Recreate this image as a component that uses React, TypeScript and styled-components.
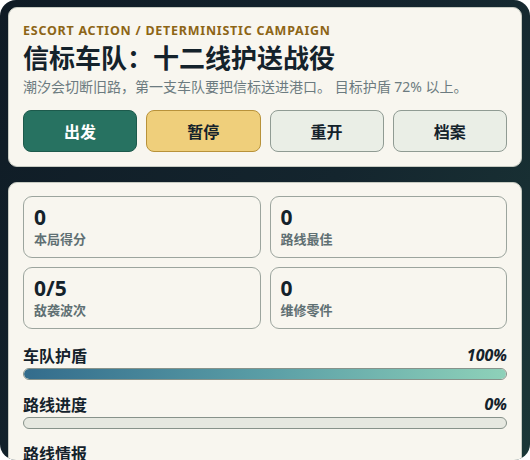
import styled, { createGlobalStyle } from 'styled-components'

const GlobalStyle = createGlobalStyle`
  html, body {
    margin: 0;
    padding: 0;
    background: #ffffff;
  }

  body {
    font-family: 'Noto Sans', 'Noto Sans CJK SC', sans-serif;
    color: #14222b;
  }

  * {
    box-sizing: border-box;
  }
`

type Tone = 'go' | 'pause' | 'plain'

const Shell = styled.div`
  display: flex;
  flex-direction: column;
  gap: 15px;
  height: 460px;
  overflow: hidden;
  padding: 7px 8px;
  border-radius: 16px;
  background: linear-gradient(120deg, #0f1b25 0%, #14252e 55%, #1b3737 100%);
`

const Card = styled.section<{ $tight?: boolean }>`
  flex-shrink: 0;
  padding: ${({ $tight }) => ($tight ? '13px 14px 14px' : '14px')};
  border: 1px solid #c7cbc2;
  border-radius: 9px;
  background: #f8f6ef;
`

const Eyebrow = styled.div`
  font-size: 12.5px;
  font-weight: 700;
  line-height: 18px;
  letter-spacing: 0.06em;
  text-transform: uppercase;
  color: #8d6516;
`

const Title = styled.h1`
  margin: 1px 0 0;
  font-size: 26px;
  font-weight: 700;
  line-height: 34px;
  color: #14222b;
`

const Lead = styled.p`
  margin: 2px 0 0;
  font-size: 14px;
  line-height: 20px;
  color: #6c7b80;
`

const Actions = styled.div`
  display: grid;
  grid-template-columns: repeat(4, 1fr);
  gap: 9px;
  margin-top: 13px;
`

const tones: Record<Tone, { bg: string; border: string; color: string }> = {
  go: { bg: '#277261', border: '#1d5a4c', color: '#ffffff' },
  pause: { bg: '#efcf7b', border: '#b8923a', color: '#14222b' },
  plain: { bg: '#eaeee6', border: '#909b93', color: '#14222b' }
}

const Button = styled.button<{ $tone: Tone }>`
  height: 42px;
  border-radius: 8px;
  border: 1px solid ${({ $tone }) => tones[$tone].border};
  background: ${({ $tone }) => tones[$tone].bg};
  color: ${({ $tone }) => tones[$tone].color};
  font-family: inherit;
  font-size: 16px;
  font-weight: 700;
  cursor: pointer;
`

const Stats = styled.div`
  display: grid;
  grid-template-columns: 1fr 1fr;
  gap: 9px;
`

const Stat = styled.div`
  height: 62px;
  padding: 7px 10px;
  border: 1px solid #9ca59e;
  border-radius: 9px;
  background: #f8f6ef;
`

const StatValue = styled.div`
  font-size: 21px;
  font-weight: 700;
  line-height: 26px;
  color: #14222b;
`

const StatLabel = styled.div`
  font-size: 13px;
  font-weight: 700;
  line-height: 18px;
  color: #607073;
`

const Meter = styled.div`
  margin-top: 15px;

  & + & {
    margin-top: 13px;
  }
`

const MeterHead = styled.div`
  display: flex;
  justify-content: space-between;
  align-items: center;
  height: 22px;
  font-size: 16px;
  font-weight: 700;
  color: #14222b;

  em {
    font-size: 16px;
    font-style: italic;
  }
`

const Track = styled.div`
  height: 12px;
  margin-top: 2px;
  overflow: hidden;
  border: 1px solid #87928a;
  border-radius: 999px;
  background: #e6e8e0;
`

const Fill = styled.div`
  height: 100%;
  border-radius: 999px;
  background: linear-gradient(90deg, #336c8c 0%, #5a9ea6 50%, #8ed1b9 100%);
`

const SectionTitle = styled.h2`
  margin: 14px 0 0;
  font-size: 16px;
  font-weight: 700;
  line-height: 22px;
  color: #14222b;
`

const stats = [
  { value: '0', label: '本局得分' },
  { value: '0', label: '路线最佳' },
  { value: '0/5', label: '敌袭波次' },
  { value: '0', label: '维修零件' }
]

const meters = [
  { label: '车队护盾', value: 100 },
  { label: '路线进度', value: 0 }
]

export default function App() {
  return (
    <>
      <GlobalStyle />
      <Shell>
        <Card>
          <Eyebrow>Escort Action / Deterministic Campaign</Eyebrow>
          <Title>信标车队：十二线护送战役</Title>
          <Lead>潮汐会切断旧路，第一支车队要把信标送进港口。 目标护盾 72% 以上。</Lead>

          <Actions>
            <Button $tone='go'>出发</Button>
            <Button $tone='pause'>暂停</Button>
            <Button $tone='plain'>重开</Button>
            <Button $tone='plain'>档案</Button>
          </Actions>
        </Card>

        <Card $tight>
          <Stats>
            {stats.map(({ value, label }) => (
              <Stat key={label}>
                <StatValue>{value}</StatValue>
                <StatLabel>{label}</StatLabel>
              </Stat>
            ))}
          </Stats>

          {meters.map(({ label, value }) => (
            <Meter key={label}>
              <MeterHead>
                <span>{label}</span>
                <em>{value}%</em>
              </MeterHead>
              <Track>
                {value > 0 && <Fill style={{ width: `${value}%` }} />}
              </Track>
            </Meter>
          ))}

          <SectionTitle>路线情报</SectionTitle>
        </Card>
      </Shell>
    </>
  )
}
